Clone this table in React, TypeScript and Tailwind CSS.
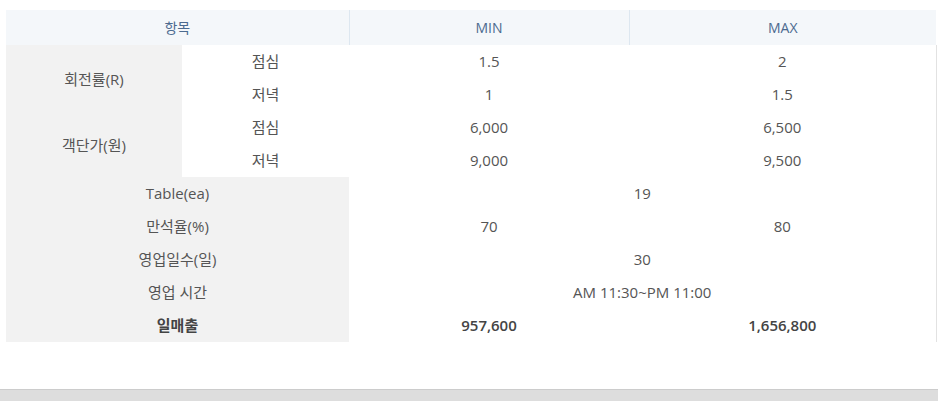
const rows = [
  { label: "Table(ea)", span: "19" },
  { label: "만석율(%)", min: "70", max: "80" },
  { label: "영업일수(일)", span: "30" },
  { label: "영업 시간", span: "AM 11:30~PM 11:00" },
  { label: "일매출", min: "957,600", max: "1,656,800", bold: true },
];

const grouped = [
  { label: "회전률(R)", items: [["점심", "1.5", "2"], ["저녁", "1", "1.5"]] },
  { label: "객단가(원)", items: [["점심", "6,000", "6,500"], ["저녁", "9,000", "9,500"]] },
];

export default function App() {
  return (
    <div
      className="w-[938px] h-[401px] bg-white flex flex-col text-[15px] text-[#555]"
      style={{ fontFamily: '"Open Sans", "Noto Sans CJK KR", sans-serif' }}
    >
      <div className="pt-[10px] pl-[6px]">
        <table className="w-[930px] border-collapse table-fixed text-center">
          <colgroup>
            <col className="w-[176px]" />
            <col className="w-[167px]" />
            <col className="w-[280px]" />
            <col className="w-[307px]" />
          </colgroup>
          <thead>
            <tr className="h-[35px] bg-[#f4f7fa] text-[#4b6a8f] text-[14px]">
              <th colSpan={2} className="font-normal border-r border-[#dde7f0]">항목</th>
              <th className="font-normal border-r border-[#dde7f0]">MIN</th>
              <th className="font-normal">MAX</th>
            </tr>
          </thead>
          <tbody>
            {grouped.map((g) =>
              g.items.map((it, i) => (
                <tr key={g.label + i} className="h-[33px]">
                  {i === 0 && (
                    <td rowSpan={2} className="bg-[#f2f2f2] pt-[2px]">
                      {g.label}
                    </td>
                  )}
                  <td>{it[0]}</td>
                  <td>{it[1]}</td>
                  <td className="border-r border-[#e2e2e2]">{it[2]}</td>
                </tr>
              ))
            )}
            {rows.map((r) => (
              <tr key={r.label} className={"h-[33px] " + (r.bold ? "font-semibold text-[#444]" : "")}>
                <td colSpan={2} className="bg-[#f2f2f2]">
                  {r.label}
                </td>
                {r.span ? (
                  <td colSpan={2} className="border-r border-[#e2e2e2]">
                    {r.span}
                  </td>
                ) : (
                  <>
                    <td>{r.min}</td>
                    <td className="border-r border-[#e2e2e2]">{r.max}</td>
                  </>
                )}
              </tr>
            ))}
          </tbody>
        </table>
      </div>
      <div className="mt-auto h-[12px] bg-[#dddddd] border-t border-[#cccccc]" />
    </div>
  );
}
